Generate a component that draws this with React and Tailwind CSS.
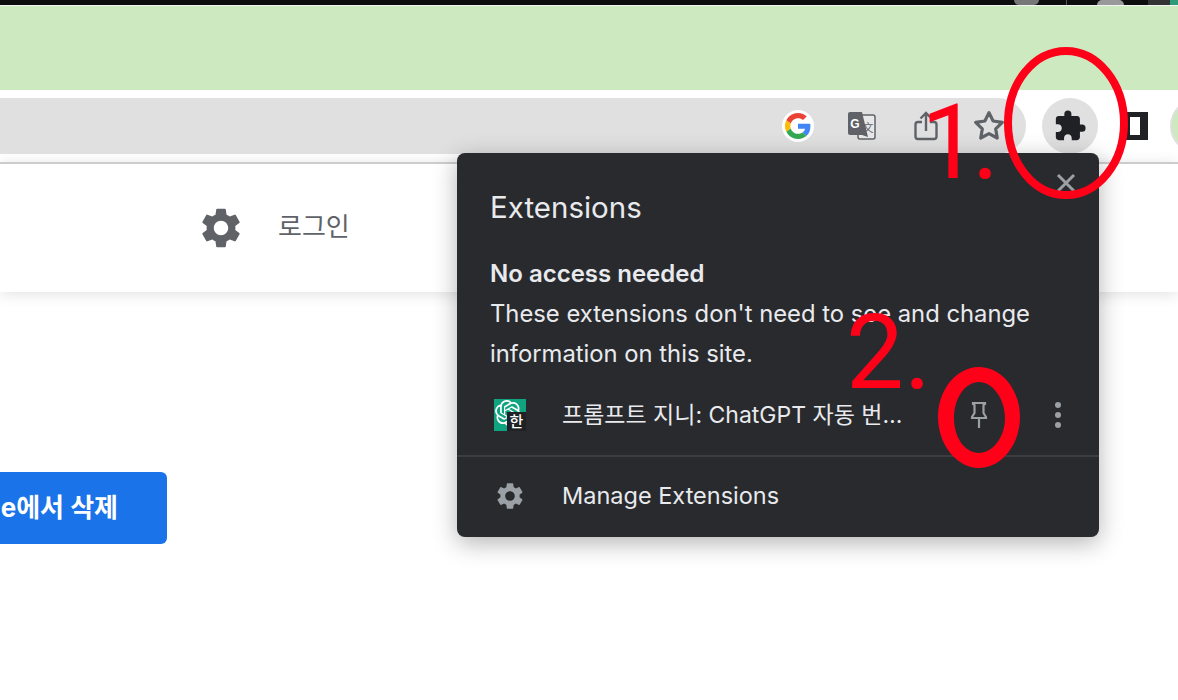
import React from 'react';
import { MdExtension, MdSettings } from 'react-icons/md';
import { SiOpenai } from 'react-icons/si';
import { FiStar } from 'react-icons/fi';

const GoogleIcon = () => (
  <div className="flex h-8 w-8 items-center justify-center rounded-full bg-white">
    <svg viewBox="0 0 48 48" className="h-[26px] w-[26px]">
      <path fill="#EA4335" d="M24 9.5c3.54 0 6.71 1.22 9.21 3.6l6.85-6.85C35.9 2.38 30.47 0 24 0 14.62 0 6.51 5.38 2.56 13.22l7.98 6.19C12.43 13.72 17.74 9.5 24 9.5z" />
      <path fill="#4285F4" d="M46.98 24.55c0-1.57-.15-3.09-.38-4.55H24v9.02h12.94c-.58 2.96-2.26 5.48-4.78 7.18l7.73 6c4.51-4.18 7.09-10.36 7.09-17.65z" />
      <path fill="#FBBC05" d="M10.53 28.59c-.48-1.45-.76-2.99-.76-4.59s.27-3.14.76-4.59l-7.98-6.19C.92 16.46 0 20.12 0 24c0 3.88.92 7.54 2.56 10.78l7.97-6.19z" />
      <path fill="#34A853" d="M24 48c6.48 0 11.93-2.13 15.89-5.81l-7.73-6c-2.15 1.45-4.92 2.3-8.16 2.3-6.26 0-11.57-4.22-13.47-9.91l-7.98 6.19C6.51 42.62 14.62 48 24 48z" />
    </svg>
  </div>
);

const TranslateIcon = () => (
  <svg viewBox="0 0 30 30" className="h-[30px] w-[30px]">
    <rect x="11" y="4" width="17" height="24" rx="2" fill="#e8e8e8" stroke="#5f6368" strokeWidth="1.5" />
    <path d="M3 1h12l6 25-6-2H3a2 2 0 0 1-2-2V3a2 2 0 0 1 2-2z" fill="#5f6368" />
    <text x="8" y="17" textAnchor="middle" fontSize="12" fontWeight="700" fill="#fff" fontFamily="Liberation Sans">G</text>
    <text x="21" y="21" textAnchor="middle" fontSize="11" fill="#5f6368" fontFamily="Noto Sans CJK SC">文</text>
  </svg>
);

const ShareIcon = () => (
  <svg viewBox="0 0 24 30" className="h-[30px] w-6" fill="none" stroke="#5f6368" strokeWidth="2.4">
    <path d="M8 11H4a2.5 2.5 0 0 0-2.5 2.5v12A2.5 2.5 0 0 0 4 28h16a2.5 2.5 0 0 0 2.5-2.5v-12A2.5 2.5 0 0 0 20 11h-4" />
    <path d="M12 20V2M6.5 7.5 12 2l5.5 5.5" />
  </svg>
);

const PinIcon = () => (
  <svg viewBox="0 0 18 28" className="h-7 w-[18px]" fill="none" stroke="#9aa0a6" strokeWidth="2.2">
    <path d="M3 2h12v1l-1.5 1v8l2.5 4v1H2v-1l2.5-4V4L3 3z" />
    <path d="M9 17v10" />
  </svg>
);

const App = () => {
  return (
    <div className="relative h-[700px] w-[1178px] overflow-hidden bg-white font-['Inter','Noto_Sans_CJK_KR',sans-serif]">
      {/* mac menu bar, only the bottom edge is visible */}
      <div className="flex h-[6px] items-start border-b border-[#f4f4f4] bg-[#0d0d0d]">
        <div className="ml-[1014px] h-[5px] w-[25px] rounded-b-full bg-[#777]" />
        <div className="ml-[27px] h-[5px] w-px bg-[#555]" />
        <div className="ml-[30px] h-[5px] w-[27px] rounded-t-full bg-[#999]" />
        <div className="ml-6 h-[5px] w-[22px] bg-[#333]" />
        <div className="h-[5px] w-[8px] bg-[#2d9a7a]" />
      </div>
      <div className="h-[84px] bg-[#cde9c0]" />

      {/* toolbar */}
      <div className="flex h-[72px] items-start overflow-hidden pt-2">
        <div className="flex h-14 w-[1026px] shrink-0 items-center justify-end rounded-r-[28px] bg-[#e0e0e0] pr-[21px]">
          <GoogleIcon />
          <div className="ml-[33px]"><TranslateIcon /></div>
          <div className="ml-[37px]"><ShareIcon /></div>
          <div className="ml-[35px]"><FiStar strokeWidth={2.4} className="h-8 w-8 stroke-[#5f6368]" /></div>
        </div>
        <div className="ml-4 flex h-14 w-14 shrink-0 items-center justify-center rounded-full bg-[#e0e0e0]">
          <MdExtension className="h-[34px] w-[34px] text-[#202124]" />
        </div>
        <div className="ml-[27px] mt-[14px] h-[28px] w-[23px] shrink-0 border-[5px] border-r-[8px] border-[#202124] bg-white" />
        <div className="ml-[22px] h-14 w-14 shrink-0 rounded-full border-2 border-[#e0e0e0] bg-[#cde9c0]" />
      </div>

      {/* page header */}
      <div className="flex h-[130px] items-center border-t-2 border-[#cccccc] bg-white pl-[197px] shadow-[0_2px_14px_rgba(0,0,0,0.12)]">
        <MdSettings className="h-12 w-12 text-[#5f6368]" />
        <span className="ml-[33px] pb-1 text-[26px] text-[#5f6368]">로그인</span>
      </div>

      {/* remove button */}
      <div className="mt-[180px] flex h-[72px] w-[167px] items-center justify-end whitespace-nowrap rounded-r-[6px] bg-[#1a73e8] pb-[2px] pr-[49px] text-[26px] font-bold text-white">
        Chrome에서 삭제
      </div>

      {/* extensions popup */}
      <div className="absolute left-[457px] top-[153px] flex h-[384px] w-[642px] flex-col rounded-lg bg-[#292a2d] text-[#e8eaed] shadow-[0_6px_24px_rgba(0,0,0,0.3)]">
        <div className="flex h-[101px] items-start pl-[33px] pt-[36px]">
          <span className="text-[29.5px] leading-9">Extensions</span>
        </div>
        <div className="absolute right-[23px] top-[20px] text-[#9aa0a6]">
          <svg viewBox="0 0 20 20" className="h-5 w-5" fill="none" stroke="currentColor" strokeWidth="3">
            <path d="M2 2l16 16M18 2 2 18" />
          </svg>
        </div>
        <div className="px-[33px] text-[23.8px] leading-10">
          <div className="text-[24px] font-semibold">No access needed</div>
          <div>These extensions don't need to see and change information on this site.</div>
        </div>
        <div className="flex h-[81px] shrink-0 items-center pl-[37px]">
          <div className="relative h-8 w-8 shrink-0 bg-[#10a37f]">
            <SiOpenai className="absolute left-[1px] top-[1px] h-[26px] w-[26px] text-white" />
            <div className="absolute bottom-0 right-0 flex h-[19px] w-[19px] items-center justify-center bg-[#202124] text-[15px] font-medium leading-none text-white">한</div>
          </div>
          <span className="ml-9 w-[345px] truncate whitespace-nowrap text-[23px] leading-8">프롬프트 지니: ChatGPT 자동 번역기</span>
          <div className="ml-[63px]"><PinIcon /></div>
          <div className="ml-[67px] flex flex-col gap-[4px]">
            <div className="h-[6px] w-[6px] rounded-full bg-[#9aa0a6]" />
            <div className="h-[6px] w-[6px] rounded-full bg-[#9aa0a6]" />
            <div className="h-[6px] w-[6px] rounded-full bg-[#9aa0a6]" />
          </div>
        </div>
        <div className="h-[2px] shrink-0 bg-[#3c3d41]" />
        <div className="flex flex-1 items-center pb-[2px] pl-[37px]">
          <MdSettings className="h-8 w-8 text-[#9aa0a6]" />
          <span className="ml-9 text-[23.5px]">Manage Extensions</span>
        </div>
      </div>

      {/* red annotations */}
      <span className="absolute left-[921px] top-[85px] font-['Roboto',sans-serif] text-[103px] leading-[115px] tracking-[-7px] text-[#ff0019]">1.</span>
      <span className="absolute left-[846px] top-[295px] font-['Roboto',sans-serif] text-[103px] leading-[115px] text-[#ff0019]">2.</span>
      <svg className="absolute left-[1000px] top-[42px] h-[162px] w-[132px]" viewBox="0 0 132 162" fill="none">
        <ellipse cx="66" cy="81" rx="58" ry="72" stroke="#ff0019" strokeWidth="8" />
      </svg>
      <svg className="absolute left-[936px] top-[365px] h-[105px] w-[86px]" viewBox="0 0 86 105">
        <path
          fillRule="evenodd"
          fill="#ff0019"
          d="M43 2C65 2 84 24 84 52S65 103 43 103 2 80 2 52 21 2 43 2zM43 17C30 17 18 32 18 53S30 88 43 88 69 73 69 53 56 17 43 17z"
        />
      </svg>
    </div>
  );
};

export default App;
